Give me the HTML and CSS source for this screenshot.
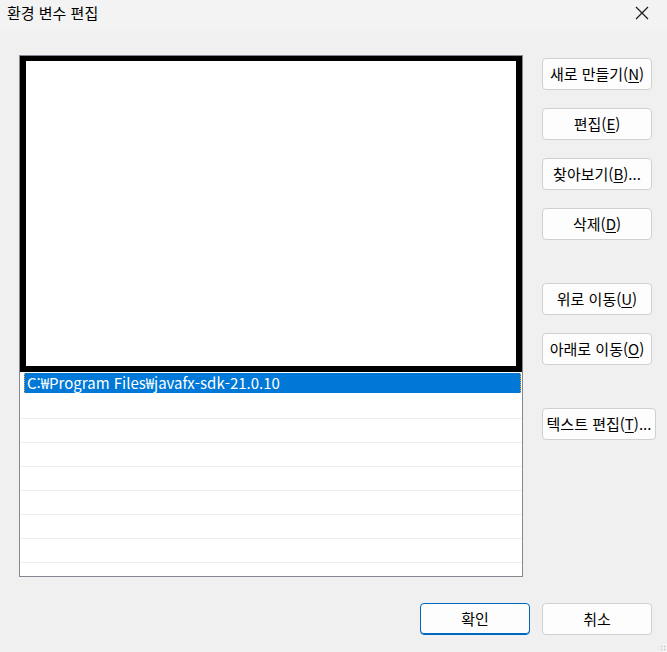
FILE: index.html
```html
<!DOCTYPE html>
<html lang="ko">
<head>
<meta charset="utf-8">
<link rel="stylesheet" href="styles.css">
</head>
<body>
<div class="window">
  <div class="titlebar">
    <span class="title">환경 변수 편집</span>
    <svg class="close" width="14" height="14" viewBox="0 0 14 14"><path d="M1 1 L13 13 M13 1 L1 13" stroke="#1a1a1a" stroke-width="1.2" fill="none"/></svg>
  </div>
  <div class="main">
    <div class="list">
      <div class="overlay"></div>
      <div class="row sel"><span class="sel-fill">C:₩Program Files₩javafx-sdk-21.0.10</span></div>
      <div class="row"></div>
      <div class="row"></div>
      <div class="row"></div>
      <div class="row"></div>
      <div class="row"></div>
      <div class="row"></div>
      <div class="row"></div>
    </div>
    <div class="side">
      <button class="btn">새로 만들기(<u>N</u>)</button>
      <button class="btn">편집(<u>E</u>)</button>
      <button class="btn">찾아보기(<u>B</u>)...</button>
      <button class="btn">삭제(<u>D</u>)</button>
      <button class="btn gap">위로 이동(<u>U</u>)</button>
      <button class="btn">아래로 이동(<u>O</u>)</button>
      <button class="btn gap wide">텍스트 편집(<u>T</u>)...</button>
    </div>
  </div>
  <div class="footer">
    <button class="btn ok">확인</button>
    <button class="btn">취소</button>
  </div>
  <div class="grip"></div>
</div>
</body>
</html>
```
FILE: styles.css
```css
* { box-sizing: border-box; }
html, body { margin: 0; padding: 0; }
body {
  width: 667px;
  height: 652px;
  background: #f0f0f0;
  font-family: "Noto Sans CJK KR", "Noto Sans", sans-serif;
  color: #000;
  overflow: hidden;
}
.window { position: relative; width: 667px; height: 652px; }
.titlebar {
  height: 31px;
  background: #f3f3f3;
  display: flex;
  align-items: center;
  justify-content: space-between;
  padding: 0 18px 0 7px;
}
.title { font-size: 15px; line-height: 20px; margin-top: -6px; color: #000; }
.close { margin-top: -6px; }
.main {
  display: flex;
  gap: 19px;
  padding: 24px 0 0 19px;
}
.list {
  position: relative;
  width: 504px;
  height: 522px;
  border: 1px solid #828790;
  background: #fff;
  overflow: hidden;
}
.overlay {
  margin-top: -1px;
  height: 317px;
  border: 6px solid #000;
  background: #fff;
}
.row {
  height: 24px;
  border-bottom: 1px solid #eeeeee;
}
.row.sel {
  height: 23px;
  border-bottom: none;
  padding: 1px 1px 2px 4px;
}
.sel-fill {
  display: block;
  height: 20px;
  background: #0078d7;
  color: #fff;
  font-size: 15px;
  line-height: 20px;
  padding-left: 2px;
  border-left: 1px dotted #f0a040;
  border-right: 1px dotted #f0a040;
  white-space: nowrap;
}
.side {
  display: flex;
  flex-direction: column;
  padding-top: 3px;
  gap: 18px;
  align-items: flex-start;
}
.btn {
  width: 110px;
  height: 32px;
  background: #fdfdfd;
  border: 1px solid #d0d0d0;
  border-radius: 4px;
  font-family: "Noto Sans CJK KR", "Noto Sans", sans-serif;
  font-size: 15px;
  color: #000;
  padding: 0;
  white-space: nowrap;
  line-height: 20px;
}
.btn u { text-underline-offset: 2px; }
.btn.gap { margin-top: 25px; }
.btn.wide { width: 114px; }
.footer {
  display: flex;
  justify-content: flex-end;
  gap: 12px;
  padding: 26px 15px 0 0;
}
.btn.ok { border: 1px solid #0067c0; box-shadow: inset 0 -1px 0 #0067c0; }
.grip {
  position: absolute;
  right: 1px;
  bottom: 1px;
  width: 6px;
  height: 6px;
  background:
    radial-gradient(circle, #b0b0b0 0.8px, transparent 1px) 0 0 / 3px 3px;
}
```
